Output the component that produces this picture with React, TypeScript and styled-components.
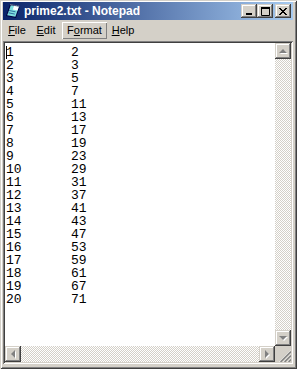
import React from "react";
import styled, { createGlobalStyle } from "styled-components";

const primes = [2, 3, 5, 7, 11, 13, 17, 19, 23, 29, 31, 37, 41, 43, 47, 53, 59, 61, 67, 71];

const GlobalStyle = createGlobalStyle`
  html, body {
    margin: 0;
    padding: 0;
    background: #d4d0c8;
  }
  * {
    box-sizing: border-box;
  }
`;

const raised = `
  background: #d4d0c8;
  box-shadow: inset -1px -1px #404040, inset 1px 1px #d4d0c8,
    inset -2px -2px #808080, inset 2px 2px #fff;
`;

const Window = styled.div`
  width: 297px;
  height: 369px;
  display: flex;
  flex-direction: column;
  padding: 2px 4px 5px 3px;
  background: #d4d0c8;
  box-shadow: inset 1px 1px #d4d0c8, inset -1px -1px #404040,
    inset 2px 2px #fff, inset -2px -2px #808080;
  font-family: "Liberation Sans", Arial, sans-serif;
`;

const TitleBar = styled.div`
  height: 18px;
  flex: none;
  display: flex;
  align-items: center;
  padding: 0 2px;
  background: linear-gradient(to right, #0a246a, #a6caf0);
`;

const Title = styled.span`
  flex: 1;
  margin-left: 3px;
  color: #fff;
  font-size: 12px;
  font-weight: bold;
  white-space: nowrap;
`;

const CaptionButton = styled.button<{ $gap?: number }>`
  ${raised};
  width: 16px;
  height: 14px;
  margin-left: ${({ $gap }) => $gap ?? 0}px;
  padding: 0;
  border: none;
  display: flex;
  align-items: center;
  justify-content: center;
`;

const MenuBar = styled.div`
  height: 21px;
  flex: none;
  display: flex;
  padding: 2px 0 0 1px;
  font-size: 11px;
  color: #000;
`;

const MenuItem = styled.div<{ $w: number; $active?: boolean }>`
  width: ${({ $w }) => $w}px;
  height: 17px;
  line-height: 17px;
  text-align: center;
  box-shadow: ${({ $active }) =>
    $active ? "inset 1px 1px #fff, inset -1px -1px #808080" : "none"};

  u {
    text-underline-offset: 1px;
  }
`;

const EditFrame = styled.div`
  flex: 1;
  display: grid;
  grid-template-columns: 1fr 16px;
  grid-template-rows: 1fr 16px;
  padding: 2px;
  box-shadow: inset 1px 1px #808080, inset -1px -1px #fff,
    inset 2px 2px #404040, inset -2px -2px #d4d0c8;
`;

const TextArea = styled.div`
  background: #fff;
  padding: 3px 0 0 1px;
  font-family: "Liberation Mono", "Courier New", monospace;
  font-size: 13px;
  line-height: 13px;
  color: #000;
  overflow: hidden;
`;

const Line = styled.div`
  display: flex;
  height: 13px;
  white-space: pre;
`;

const Index = styled.span`
  width: 65px;
  display: flex;
`;

const Caret = styled.span`
  width: 1px;
  height: 13px;
  margin-right: -1px;
  background: #000;
`;

const Track = styled.div<{ $vertical?: boolean }>`
  display: flex;
  flex-direction: ${({ $vertical }) => ($vertical ? "column" : "row")};
  justify-content: space-between;
  background: repeating-conic-gradient(#fff 0 25%, #d4d0c8 0 50%) 0 0 / 2px 2px;
`;

const ScrollButton = styled.div`
  ${raised};
  width: 16px;
  height: 16px;
  flex: none;
  display: flex;
  align-items: center;
  justify-content: center;
`;

const Grip = styled.div`
  background: #d4d0c8;
  display: flex;
  align-items: flex-end;
  justify-content: flex-end;
`;

const NotepadIcon = () => (
  <svg width="16" height="16" viewBox="0 0 16 16">
    <polygon points="5,1 15,3 11,15 1,13" fill="#000040" />
    <polygon points="5.8,2.2 13.8,3.8 10.4,13.8 2.2,12.2" fill="#7fe0e0" />
    <polygon points="9,3 13.8,3.8 12.6,7.4 7.8,6.5" fill="#fff" />
    <line x1="4.2" y1="7.5" x2="10.5" y2="8.8" stroke="#2f6f9f" strokeWidth="1" />
    <line x1="3.5" y1="9.8" x2="9.8" y2="11.1" stroke="#2f6f9f" strokeWidth="1" />
    <line x1="5.5" y1="1.5" x2="14.5" y2="3.3" stroke="#d0d0d0" strokeWidth="1" strokeDasharray="1 1" />
  </svg>
);

const Arrow = ({ dir }: { dir: "up" | "down" | "left" | "right" }) => {
  const pts = {
    up: "4,1 8,5 0,5",
    down: "0,1 8,1 4,5",
    left: "5,0 5,8 1,4",
    right: "1,0 1,8 5,4",
  }[dir];
  const vertical = dir === "up" || dir === "down";
  return (
    <svg width={vertical ? 9 : 7} height={vertical ? 7 : 9} viewBox={vertical ? "0 0 9 7" : "0 0 7 9"}>
      <polygon points={pts} fill="#fff" transform="translate(1,1)" />
      <polygon points={pts} fill="#808080" />
    </svg>
  );
};

const SizeGrip = () => (
  <svg width="12" height="12" viewBox="0 0 12 12">
    {[0, 4, 8].map((o) => (
      <g key={o}>
        <line x1={o + 0.5} y1="12" x2="12" y2={o + 0.5} stroke="#fff" strokeWidth="1" />
        <line x1={o + 1.5} y1="12" x2="12" y2={o + 1.5} stroke="#808080" strokeWidth="1.5" />
      </g>
    ))}
  </svg>
);

const App = () => {
  return (
    <>
      <GlobalStyle />
      <Window>
        <TitleBar>
          <NotepadIcon />
          <Title>prime2.txt - Notepad</Title>
          <CaptionButton>
            <svg width="8" height="7" viewBox="0 0 8 7">
              <rect x="1" y="5" width="6" height="2" fill="#000" />
            </svg>
          </CaptionButton>
          <CaptionButton>
            <svg width="9" height="9" viewBox="0 0 9 9">
              <path d="M0.5 0.5h8v8h-8z" fill="none" stroke="#000" />
              <rect x="0" y="0" width="9" height="2" fill="#000" />
            </svg>
          </CaptionButton>
          <CaptionButton $gap={2}>
            <svg width="8" height="7" viewBox="0 0 8 7">
              <path d="M0 0 L7 7 M1 0 L8 7 M7 0 L0 7 M8 0 L1 7" stroke="#000" strokeWidth="1" />
            </svg>
          </CaptionButton>
        </TitleBar>
        <MenuBar>
          <MenuItem $w={26}>
            <u>F</u>ile
          </MenuItem>
          <MenuItem $w={32}>
            <u>E</u>dit
          </MenuItem>
          <MenuItem $w={45} $active>
            F<u>o</u>rmat
          </MenuItem>
          <MenuItem $w={32}>
            <u>H</u>elp
          </MenuItem>
        </MenuBar>
        <EditFrame>
          <TextArea>
            {primes.map((p, i) => (
              <Line key={i}>
                <Index>
                  {i === 0 && <Caret />}
                  {i + 1}
                </Index>
                {p}
              </Line>
            ))}
          </TextArea>
          <Track $vertical>
            <ScrollButton>
              <Arrow dir="up" />
            </ScrollButton>
            <ScrollButton>
              <Arrow dir="down" />
            </ScrollButton>
          </Track>
          <Track>
            <ScrollButton>
              <Arrow dir="left" />
            </ScrollButton>
            <ScrollButton>
              <Arrow dir="right" />
            </ScrollButton>
          </Track>
          <Grip>
            <SizeGrip />
          </Grip>
        </EditFrame>
      </Window>
    </>
  );
};

export default App;
